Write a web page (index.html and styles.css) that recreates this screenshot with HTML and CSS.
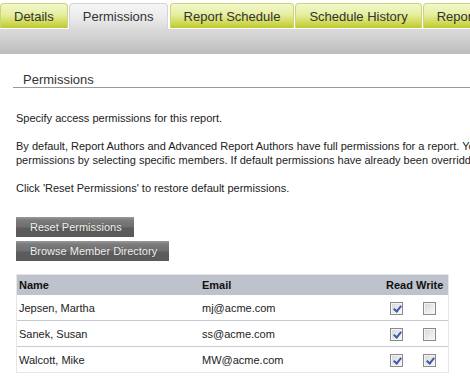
FILE: index.html
```html
<!DOCTYPE html>
<html>
<head>
<meta charset="utf-8">
<link rel="stylesheet" href="styles.css">
</head>
<body>
<div class="tabs">
  <div class="tab">Details</div>
  <div class="tab active">Permissions</div>
  <div class="tab">Report Schedule</div>
  <div class="tab">Schedule History</div>
  <div class="tab">Report Settings</div>
</div>
<div class="bar"></div>
<div class="content">
  <h2 class="heading">Permissions</h2>
  <p class="para">Specify access permissions for this report.</p>
  <p class="para">By default, Report Authors and Advanced Report Authors have full permissions for a report. You can override default<br>permissions by selecting specific members. If default permissions have already been overridden, you can</p>
  <p class="para">Click 'Reset Permissions' to restore default permissions.</p>
  <div class="buttons">
    <button class="btn">Reset Permissions</button>
    <button class="btn">Browse Member Directory</button>
  </div>
  <div class="table">
    <div class="row head">
      <div class="c name">Name</div>
      <div class="c email">Email</div>
      <div class="c read">Read</div>
      <div class="c write">Write</div>
    </div>
    <div class="row">
      <div class="c name">Jepsen, Martha</div>
      <div class="c email">mj@acme.com</div>
      <div class="c read"><span class="cb on"></span></div>
      <div class="c write"><span class="cb"></span></div>
    </div>
    <div class="row">
      <div class="c name">Sanek, Susan</div>
      <div class="c email">ss@acme.com</div>
      <div class="c read"><span class="cb on"></span></div>
      <div class="c write"><span class="cb"></span></div>
    </div>
    <div class="row">
      <div class="c name">Walcott, Mike</div>
      <div class="c email">MW@acme.com</div>
      <div class="c read"><span class="cb on"></span></div>
      <div class="c write"><span class="cb on"></span></div>
    </div>
  </div>
</div>
</body>
</html>
```
FILE: styles.css
```css
html, body {
  margin: 0;
  padding: 0;
  background: #fff;
  overflow: hidden;
  width: 470px;
  height: 380px;
  font-family: "Liberation Sans", Arial, sans-serif;
  color: #222;
}
.tabs {
  display: flex;
  gap: 1px;
  height: 29px;
  padding-top: 3px;
  box-sizing: border-box;
  white-space: nowrap;
}
.tab {
  flex: none;
  height: 25px;
  box-sizing: border-box;
  padding: 2px 13px 0;
  line-height: 22px;
  font-size: 13px;
  color: #333;
  border: 1px solid #cdd47a;
  border-bottom: none;
  border-radius: 4px 4px 0 0;
  background: linear-gradient(#f3f7cc 0%, #e6ee9f 45%, #d2dc5c 75%, #bec92e 100%);
}
.tab.active {
  height: 26px;
  margin-right: 1px;
  border-color: #d4d4d4;
  background: linear-gradient(#f6f6f6 0%, #e9e9e9 60%, #dbdbdb 100%);
}
.bar {
  height: 25px;
  background: linear-gradient(#dadada 0%, #cdcdcd 50%, #bcbcbc 100%);
}
.content {
  padding: 0 0 0 16px;
}
.heading {
  margin: 18px 0 0 -3px;
  padding-left: 10px;
  font-size: 13px;
  font-weight: normal;
  line-height: 15px;
  color: #333;
  border-bottom: 1px solid #999;
}
.para {
  margin: 14px 0 0;
  font-size: 11px;
  line-height: 14px;
  white-space: nowrap;
  color: #222;
}
.heading + .para {
  margin-top: 23px;
}
.buttons {
  margin-top: 22px;
  display: flex;
  flex-direction: column;
  align-items: flex-start;
  gap: 4px;
}
.btn {
  height: 20px;
  padding: 0 12px 0 14px;
  border: none;
  font-family: "Liberation Sans", Arial, sans-serif;
  font-size: 11px;
  line-height: 20px;
  color: #f2f2f2;
  text-shadow: 0 0 1px #444;
  background: linear-gradient(#9a9a9a 0%, #7c7c7c 15%, #6e6e6e 50%, #5c5c5c 55%, #5a5a5a 100%);
  cursor: pointer;
}
.table {
  margin-top: 13px;
  width: 433px;
  border: 1px solid #e6e6ea;
  box-sizing: border-box;
  font-size: 11px;
}
.row {
  display: grid;
  grid-template-columns: 183px 184px 32px 32px;
  height: 25px;
  align-items: center;
  border-bottom: 1px solid #c9c9d6;
}
.row:last-child {
  border-bottom: none;
}
.row.head {
  height: 20px;
  border-bottom: none;
  background: #bec2cc;
  font-weight: bold;
  color: #111;
}
.c {
  white-space: nowrap;
}
.name { padding-left: 2px; }
.email { padding-left: 2px; }
.head .read { padding-left: 2px; }
.head .write { padding-left: 0; }
.row .read .cb { margin-left: 6px; }
.row .write .cb { margin-left: 7px; }
.cb {
  display: block;
  width: 13px;
  height: 13px;
  box-sizing: border-box;
  border: 1px solid #8a8a8a;
  box-shadow: inset 0 0 0 1px #f4f4f4;
  background: linear-gradient(135deg, #d6d6d6 0%, #ececec 60%, #fafafa 100%);
  position: relative;
  margin-top: 1px;
}
.cb.on::after {
  content: "";
  position: absolute;
  left: 4px;
  top: 1px;
  width: 3px;
  height: 6px;
  border-right: 2px solid #3f58a8;
  border-bottom: 2px solid #3f58a8;
  transform: rotate(40deg);
}
```
